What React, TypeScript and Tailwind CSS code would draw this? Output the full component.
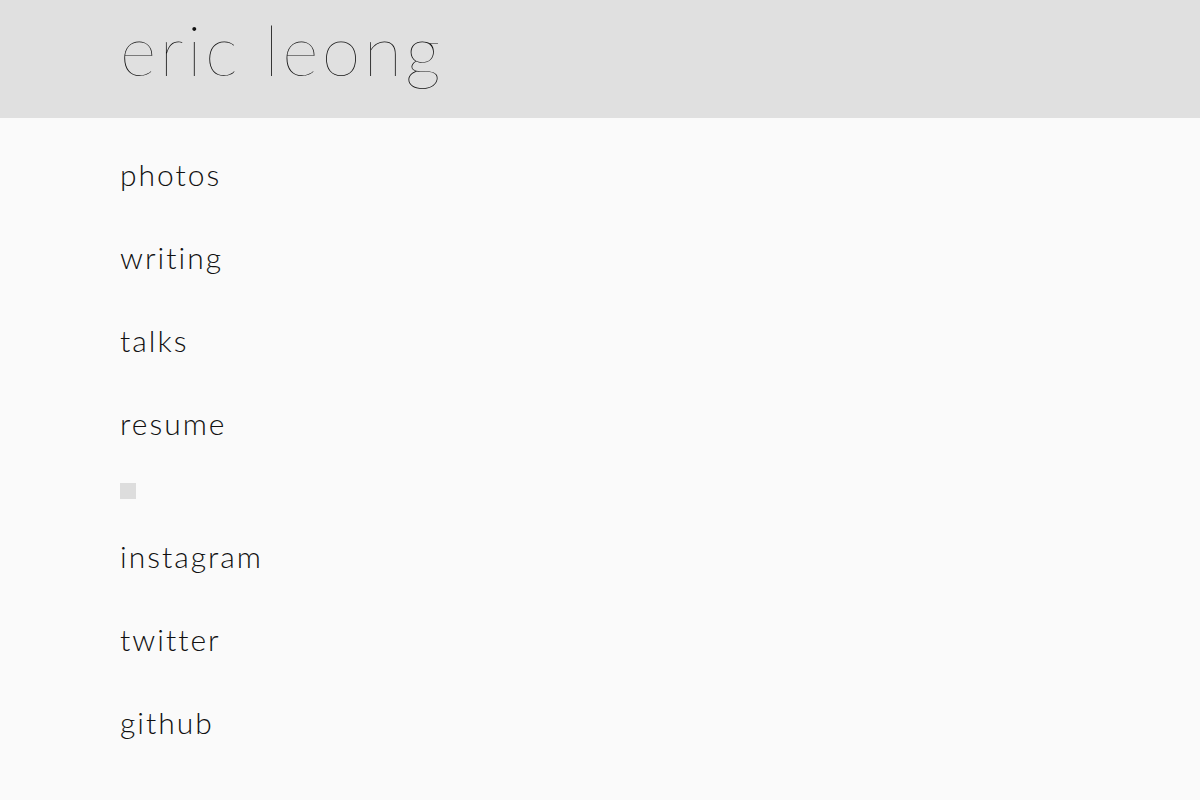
import React from "react";

const items1 = ["photos", "writing", "talks", "resume"];
const items2 = ["instagram", "twitter", "github"];

export default function App() {
  return (
    <div className="min-h-[800px] bg-[#fafafa] text-[#111]" style={{ fontFamily: "Lato, 'Noto Sans', sans-serif" }}>
      <header className="h-[118px] bg-[#e0e0e0] pl-[120px] flex items-start">
        <h1 className="text-[70px] font-thin leading-[98px] tracking-[3.4px] text-[#111]">eric leong</h1>
      </header>
      <nav className="pl-[120px] pt-[36px] flex flex-col">
        {items1.map((t) => (
          <a key={t} className="block h-[83px] text-[30px] leading-[40px] font-light tracking-[2px]">{t}</a>
        ))}
        <div className="w-4 h-4 bg-[#dddddd] -mt-[3px] mb-[37px]" />
        {items2.map((t) => (
          <a key={t} className="block h-[83px] text-[30px] leading-[40px] font-light tracking-[2px]">{t}</a>
        ))}
      </nav>
    </div>
  );
}
